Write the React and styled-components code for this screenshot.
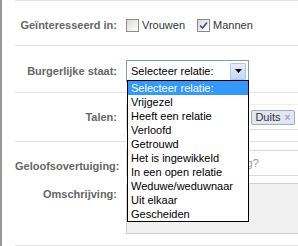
import React from "react";
import styled, { createGlobalStyle } from "styled-components";

const GlobalStyle = createGlobalStyle`
  html, body {
    margin: 0;
    padding: 0;
    background: #fff;
    overflow: hidden;
  }
  body {
    font-family: "Liberation Sans", Arial, sans-serif;
    font-size: 11px;
    color: #333;
  }
`;

const Page = styled.div`
  width: 298px;
  height: 246px;
  border-left: 2px solid #9a9a9a;
  box-sizing: border-box;
  padding-left: 13px;
  overflow: hidden;
`;

const Row = styled.div`
  display: grid;
  grid-template-columns: 102px 1fr;
  column-gap: 9px;
  align-items: ${(p) => p.$align || "center"};
  border-top: ${(p) => (p.$noLine ? "none" : "1px solid #e2e2e2")};
  padding-top: ${(p) => p.$top}px;
  padding-bottom: ${(p) => p.$bottom}px;
`;

const Label = styled.label`
  font-weight: bold;
  color: #666;
  text-align: right;
  line-height: 14px;
  white-space: nowrap;
  margin-top: ${(p) => p.$offset || 0}px;
`;

const Checks = styled.div`
  display: flex;
  align-items: center;
  line-height: 14px;
`;

const CheckItem = styled.span`
  display: flex;
  align-items: center;
  gap: 3px;
  margin-right: ${(p) => p.$gap || 0}px;
`;

const Box = styled.span`
  width: 11px;
  height: 11px;
  border: 1px solid #8b8b8b;
  background: linear-gradient(135deg, #dcdcd6 0%, #f4f4f0 70%, #fff 100%);
  display: flex;
  align-items: center;
  justify-content: center;
`;

const SelectWrap = styled.div`
  position: relative;
  width: 123px;
  height: 22px;
`;

const SelectBox = styled.div`
  box-sizing: border-box;
  height: 22px;
  border: 1px solid #7f9db9;
  background: #fff;
  display: flex;
  align-items: center;
  justify-content: space-between;
  padding: 0 2px 0 4px;
  color: #000;
`;

const DropButton = styled.span`
  box-sizing: border-box;
  width: 16px;
  height: 17px;
  border: 1px solid #b4c6ee;
  border-radius: 1px;
  background: linear-gradient(#e6eefc, #c5d6fa);
  display: flex;
  align-items: center;
  justify-content: center;
`;

const Options = styled.ul`
  position: absolute;
  top: 20px;
  left: 1px;
  width: 122px;
  box-sizing: border-box;
  margin: 0;
  padding: 0;
  list-style: none;
  background: #fff;
  border: 1px solid #000;
  z-index: 5;
`;

const Option = styled.li`
  height: 14px;
  line-height: 14px;
  padding-left: 3px;
  color: ${(p) => (p.$active ? "#fff" : "#000")};
  background: ${(p) => (p.$active ? "#3399ff" : "transparent")};
  white-space: nowrap;
`;

const TokenField = styled.div`
  box-sizing: border-box;
  height: 26px;
  width: 260px;
  border: 1px solid #dcdcdc;
  border-top-color: #eee;
  display: flex;
  align-items: center;
  gap: 3px;
  padding-left: 0;
  white-space: nowrap;
`;

const Token = styled.span`
  box-sizing: border-box;
  height: 15px;
  border: 1px solid #9dacce;
  border-radius: 2px;
  background: #e2e6f0;
  display: inline-flex;
  align-items: center;
  padding: 0 4px 0 3px;
  gap: 4px;
  color: #333;
  line-height: 13px;
`;

const Remove = styled.span`
  color: #9aa6c2;
  font-size: 10px;
  font-weight: bold;
`;

const TextInput = styled.div`
  box-sizing: border-box;
  height: 26px;
  width: 200px;
  border: 1px solid #dadada;
  display: flex;
  align-items: center;
  padding-left: 3px;
  color: #999;
  white-space: nowrap;
`;

const TextArea = styled.div`
  box-sizing: border-box;
  height: 51px;
  width: 200px;
  border: 1px solid #cfcfcf;
  background: #f1f1f1;
`;

const BottomLine = styled.div`
  border-top: 1px solid #e2e2e2;
`;

const relaties = [
  "Selecteer relatie:",
  "Vrijgezel",
  "Heeft een relatie",
  "Verloofd",
  "Getrouwd",
  "Het is ingewikkeld",
  "In een open relatie",
  "Weduwe/weduwnaar",
  "Uit elkaar",
  "Gescheiden",
];

const talen = ["Nederlands", "Fries", "Duits", "Frans"];

const Check = ({ checked }) => (
  <Box>
    {checked && (
      <svg width="9" height="9" viewBox="0 0 9 9">
        <path d="M1 4.5 L3.5 7 L8 1.5" fill="none" stroke="#3d4f8f" strokeWidth="1.6" />
      </svg>
    )}
  </Box>
);

export default function App() {
  return (
    <>
      <GlobalStyle />
      <Page>
        <Row $top={17} $bottom={13}>
          <Label>Geïnteresseerd in:</Label>
          <Checks>
            <CheckItem $gap={12}>
              <Check />
              Vrouwen
            </CheckItem>
            <CheckItem>
              <Check checked />
              Mannen
            </CheckItem>
          </Checks>
        </Row>

        <Row $top={14} $bottom={10}>
          <Label>Burgerlijke staat:</Label>
          <SelectWrap>
            <SelectBox>
              <span>Selecteer relatie:</span>
              <DropButton>
                <svg width="7" height="4" viewBox="0 0 7 4">
                  <path d="M0 0 H7 L3.5 4 Z" fill="#000" />
                </svg>
              </DropButton>
            </SelectBox>
            <Options>
              {relaties.map((r, i) => (
                <Option key={r} $active={i === 0}>
                  {r}
                </Option>
              ))}
            </Options>
          </SelectWrap>
        </Row>

        <Row $top={11} $bottom={11}>
          <Label>Talen:</Label>
          <TokenField>
            {talen.map((t) => (
              <Token key={t}>
                {t}
                <Remove>×</Remove>
              </Token>
            ))}
          </TokenField>
        </Row>

        <Row $top={8} $bottom={7} $align="start">
          <Label $offset={9}>Geloofsovertuiging:</Label>
          <TextInput>Welke geloofsovertuiging?</TextInput>
        </Row>

        <Row $top={0} $bottom={11} $align="start" $noLine>
          <Label $offset={4}>Omschrijving:</Label>
          <TextArea />
        </Row>
        <BottomLine />
      </Page>
    </>
  );
}
